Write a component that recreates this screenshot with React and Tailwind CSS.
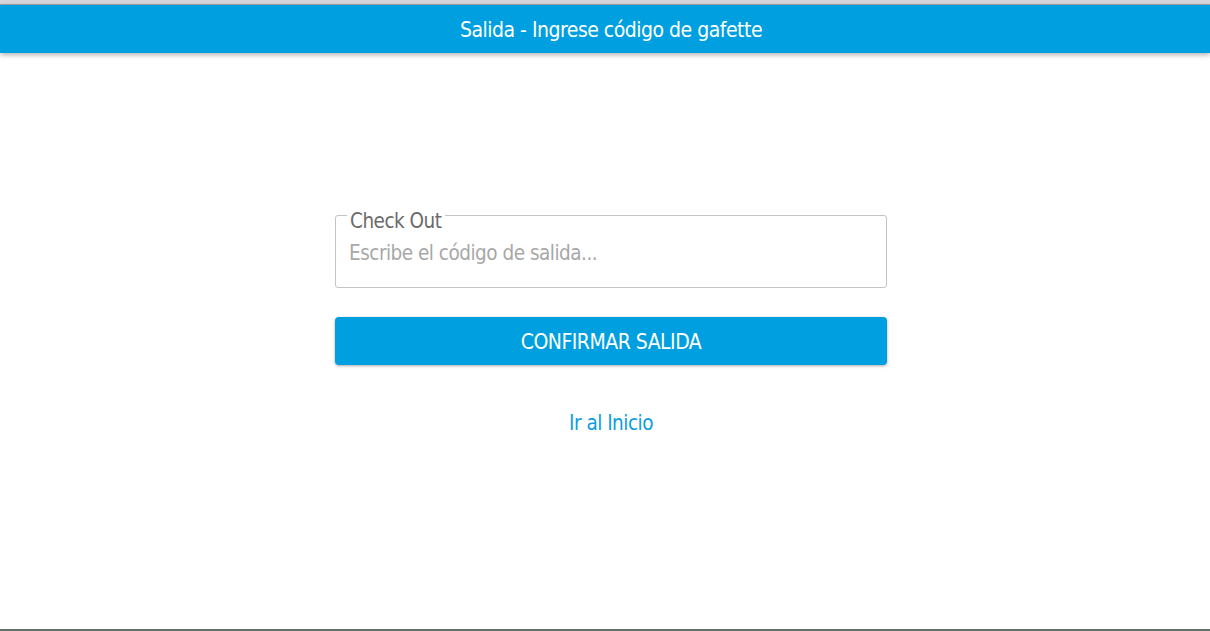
import React from 'react';

const font = { fontFamily: '"DejaVu Sans Condensed", "DejaVu Sans", sans-serif' };

export default function App() {
  return (
    <div className="min-h-[631px] bg-white flex flex-col" style={font}>
      <div className="h-[5px] bg-[#d6d6da] border-b border-[#9fa3a8]" />
      <header className="h-[48px] bg-[#009fe0] flex items-center justify-center pl-[12px] pt-[3px] shadow-[0_2px_5px_rgba(0,0,0,0.3)] relative z-10">
        <h1 className="text-white text-[21px] font-light tracking-[-0.5px]">Salida - Ingrese código de gafette</h1>
      </header>

      <main className="flex-1 flex flex-col items-center pt-[162px] pl-[12px]">
        <div className="w-[552px] flex flex-col">
          <div className="relative border border-[#c4c4c4] rounded-[3px] h-[73px] px-[10px] pt-[23px]">
            <label className="absolute left-[11px] -top-[6px] bg-white px-[3px] text-[20.5px] leading-[22px] text-[#6b6b6b] tracking-[-0.5px]">Check Out</label>
            <input
              className="w-full h-[28px] outline-none text-[20.5px] text-[#555] placeholder:text-[#a8a8a8] px-[3px] tracking-[-0.5px]"
              placeholder="Escribe el código de salida..."
            />
          </div>

          <button className="mt-[29px] h-[48px] pt-[3px] rounded-[4px] bg-[#009fe0] text-white text-[21px] uppercase shadow-[0_1px_3px_rgba(0,0,0,0.35)] tracking-[-0.5px]">
            Confirmar Salida
          </button>

          <a href="#" className="self-center mt-[43px] text-[20.5px] text-[#0d9ee0] tracking-[-0.5px]">Ir al Inicio</a>
        </div>
      </main>

      <div className="h-[2px] bg-[#5f7266]" />
    </div>
  );
}
